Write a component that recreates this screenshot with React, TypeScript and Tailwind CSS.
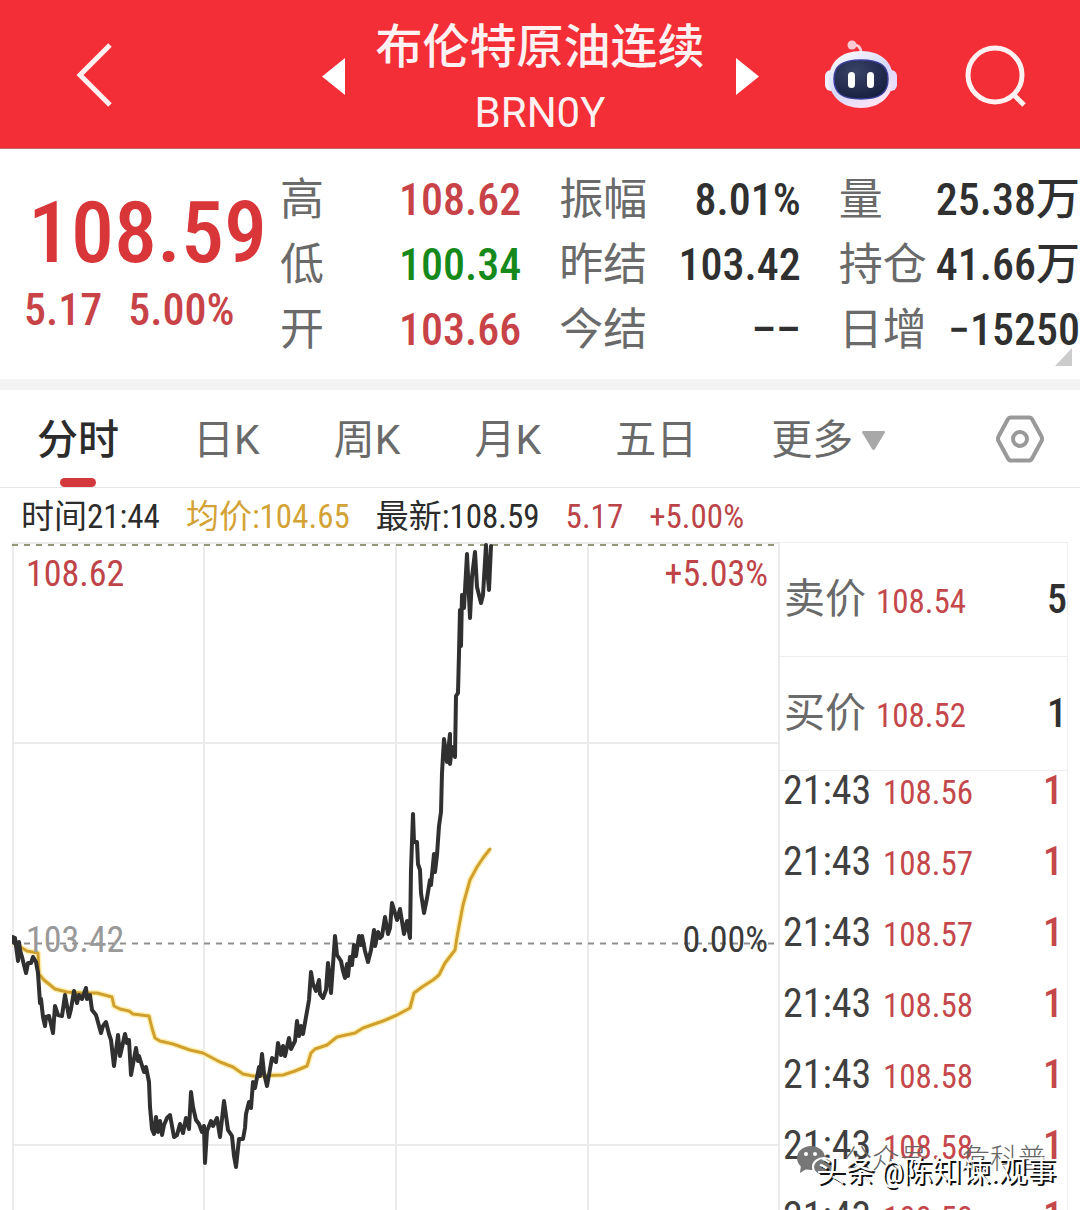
import { clsx } from "clsx";

interface Stat {
  label: string;
  value: string;
  tone?: "up" | "down";
}

interface Tick {
  time: string;
  price: string;
  volume: number;
}

// column by column, three rows each
const stats: Stat[] = [
  { label: "高", value: "108.62", tone: "up" },
  { label: "低", value: "100.34", tone: "down" },
  { label: "开", value: "103.66", tone: "up" },
  { label: "振幅", value: "8.01%" },
  { label: "昨结", value: "103.42" },
  { label: "今结", value: "––" },
  { label: "量", value: "25.38万" },
  { label: "持仓", value: "41.66万" },
  { label: "日增", value: "−15250" },
];

const tabs = ["分时", "日K", "周K", "月K", "五日"];

const quotes = [
  { label: "卖价", price: "108.54", volume: 5 },
  { label: "买价", price: "108.52", volume: 1 },
];

const ticks: Tick[] = [
  { time: "21:43", price: "108.56", volume: 1 },
  { time: "21:43", price: "108.57", volume: 1 },
  { time: "21:43", price: "108.57", volume: 1 },
  { time: "21:43", price: "108.58", volume: 1 },
  { time: "21:43", price: "108.58", volume: 1 },
  { time: "21:43", price: "108.58", volume: 1 },
  { time: "21:43", price: "108.58", volume: 1 },
];

const pricePoints =
  "13,937 14,943 15,938 18,961 19,942 20,950 22,957 26,973 28,963 31,963 33,957 36,962 38,973 40,1003 41,999 43,1017 45,1026 46,1017 49,1016 51,1024 53,1033 55,1006 58,1015 62,1016 65,995 69,1017 71,1009 74,991 77,1003 79,995 82,999 86,988 87,999 90,995 92,1010 96,1015 101,1033 103,1026 106,1022 109,1034 111,1040 114,1066 118,1035 120,1056 125,1034 127,1043 129,1040 131,1075 136,1048 138,1061 139,1056 144,1072 146,1067 149,1082 150,1107 152,1129 154,1134 156,1117 158,1132 160,1121 162,1135 164,1125 167,1118 170,1115 174,1137 177,1135 180,1124 183,1133 186,1118 189,1129 191,1092 193,1107 196,1120 199,1124 202,1132 204,1126 205,1163 207,1131 211,1121 213,1126 217,1118 220,1137 224,1101 228,1130 230,1133 232,1136 234,1156 236,1167 239,1139 243,1139 245,1128 246,1114 249,1102 251,1108 253,1082 255,1088 259,1067 260,1076 262,1054 264,1073 267,1086 272,1058 276,1062 278,1043 281,1055 283,1046 285,1056 289,1038 291,1049 295,1041 297,1021 299,1036 301,1026 303,1034 306,1017 309,1000 311,972 313,984 316,991 319,980 320,994 323,998 326,990 328,963 331,993 335,936 337,955 341,961 343,971 345,978 347,964 348,976 350,957 352,965 354,945 356,956 359,936 361,945 362,936 365,951 368,962 371,950 374,930 375,946 378,932 380,938 382,936 385,917 388,934 390,928 392,903 397,920 400,909 404,934 407,921 410,938 411,870 413,814 414,842 417,842 418,864 420,870 421,893 424,913 427,898 430,880 431,885 434,854 435,872 437,855 439,826 441,812 442,773 444,739 447,762 450,734 450,764 452,747 455,757 456,696 458,693 459,653 460,610 461,646 462,595 464,608 467,554 470,618 472,577 475,552 477,587 481,603 483,595 486,545 487,567 489,590 491,546";

const averagePoints =
  "13,942 22,948 27,951 38,953 39,974 44,980 55,989 67,992 82,993 97,993 112,997 114,1006 120,1009 129,1011 133,1014 149,1016 152,1028 155,1038 160,1041 173,1044 190,1050 203,1053 220,1062 233,1067 243,1074 253,1076 283,1075 295,1071 307,1066 311,1053 315,1049 327,1045 337,1037 355,1033 363,1028 383,1021 397,1015 410,1008 414,993 422,987 433,980 439,975 445,963 455,950 457,937 463,905 470,880 477,867 483,858 490,849";

function RobotIcon() {
  return (
    <svg width="72" height="68" viewBox="0 0 72 68" aria-hidden="true">
      <defs>
        <linearGradient id="shell" x1="0" y1="0" x2="0.6" y2="1">
          <stop offset="0" stopColor="#fff" />
          <stop offset="0.6" stopColor="#d5d8fb" />
          <stop offset="1" stopColor="#fbe4f4" />
        </linearGradient>
        <radialGradient id="visor" cx="0.4" cy="0.3" r="0.8">
          <stop offset="0" stopColor="#3a4468" />
          <stop offset="1" stopColor="#141c3c" />
        </radialGradient>
      </defs>
      <path d="M27 5 Q36 4 36 13" fill="none" stroke="#fbc9d4" strokeWidth="3" />
      <circle cx="27" cy="5" r="4.5" fill="#fbc9d4" />
      <rect x="0" y="30" width="12" height="21" rx="6" fill="#eef" />
      <rect x="60" y="30" width="12" height="21" rx="6" fill="#e6dcfa" />
      <path d="M36 11 C56 11 68 22 68 39 C68 57 54 68 36 68 C18 68 4 57 4 39 C4 22 16 11 36 11 Z" fill="url(#shell)" />
      <path d="M36 20 C55 20 63 26 63 39 C63 53 55 59 36 59 C17 59 9 53 9 39 C9 26 17 20 36 20 Z" fill="url(#visor)" stroke="#3c3f9c" strokeWidth="1.5" />
      <rect x="23" y="32" width="7" height="16" rx="3.5" fill="#fff" />
      <rect x="42" y="32" width="7" height="16" rx="3.5" fill="#fff" />
    </svg>
  );
}

function Header() {
  return (
    <header className="grid grid-cols-[1fr_auto_1fr] items-center shrink-0 h-[149px] pt-[4px] bg-[#f32e37] text-[#fff1f1] border-b border-[#b9686b]">
      <div className="flex items-center justify-between pl-[76px]">
        <button type="button" aria-label="返回">
          <svg width="38" height="68" viewBox="0 0 38 68" fill="none" stroke="currentColor" strokeWidth="5">
            <path d="M34 3 L4 33 L34 63" />
          </svg>
        </button>
        <button type="button" aria-label="上一个">
          <svg width="23" height="37" viewBox="0 0 23 37" fill="#fff">
            <path d="M23 0 V37 L0 18.500 Z" />
          </svg>
        </button>
      </div>
      <div className="px-[31px] pt-[8px] text-center">
        <h1 className="text-[47px] leading-[66px] font-medium">布伦特原油连续</h1>
        <p className="font-['Roboto'] text-[42px] leading-[66px]">BRN0Y</p>
      </div>
      <div className="flex items-center pr-[54px]">
        <button type="button" aria-label="下一个">
          <svg width="23" height="37" viewBox="0 0 23 37" fill="#fff">
            <path d="M0 0 V37 L23 18.500 Z" />
          </svg>
        </button>
        <button type="button" aria-label="智能助手" className="ml-auto pb-[5px]">
          <RobotIcon />
        </button>
        <button type="button" aria-label="搜索" className="ml-[67px]">
          <svg width="62" height="62" viewBox="0 0 62 62" fill="none" stroke="currentColor" strokeWidth="5">
            <circle cx="31" cy="30" r="27" />
            <path d="M49 49 L60 60" />
          </svg>
        </button>
      </div>
    </header>
  );
}

function Summary() {
  return (
    <section className="relative flex shrink-0 pt-[18px] pb-[17px] font-medium">
      <div className="w-[280px] shrink-0 pt-[22px] text-[#d9363a]">
        <p className="pl-[28px] text-[86px] leading-[88px]">108.59</p>
        <p className="flex gap-[26px] pl-[24px] text-[44px] leading-[66px] text-[#c84347]">
          <span>5.17</span>
          <span>5.00%</span>
        </p>
      </div>
      <dl className="flex-1 grid grid-flow-col grid-cols-3 grid-rows-3 gap-x-[38px]">
        {stats.map((stat) => (
          <div key={stat.label} className="flex items-center justify-between h-[65px] text-[44px] whitespace-nowrap">
            <dt className="font-normal text-[#6a6a6a]">{stat.label}</dt>
            <dd
              className={clsx(
                stat.tone === "up" && "text-[#c84347]",
                stat.tone === "down" && "text-[#16891b]",
                !stat.tone && "text-[#303030]"
              )}
            >
              {stat.value}
            </dd>
          </div>
        ))}
      </dl>
      <svg className="absolute right-[8px] bottom-[13px]" width="17" height="18" viewBox="0 0 17 18" fill="#ccc">
        <path d="M17 0 V18 H0 Z" />
      </svg>
    </section>
  );
}

function TabBar() {
  return (
    <nav className="flex items-stretch gap-[74px] shrink-0 h-[98px] pl-[37px] pr-[36px] border-b border-[#e6e6e6] font-['Roboto','Noto_Sans_CJK_SC',sans-serif] text-[41px]">
      {tabs.map((tab, index) => (
        <button
          key={tab}
          type="button"
          className={clsx("relative pt-[4px]", index === 0 ? "font-medium text-[#2c2c2c]" : "text-[#6a6a6a]")}
        >
          {tab}
          {index === 0 && (
            <span className="absolute bottom-0 left-1/2 -translate-x-1/2 w-[36px] h-[9px] rounded-full bg-[#d3383c]" />
          )}
        </button>
      ))}
      <button type="button" className="flex items-center gap-[9px] pt-[4px] text-[#6a6a6a]">
        更多
        <svg width="23" height="19" viewBox="0 0 23 19" fill="#a8a8a8">
          <path d="M1 0 H22 Q24 1 22 3 L13 18 Q11.500 20 10 18 L1 3 Q-1 1 1 0 Z" />
        </svg>
      </button>
      <button type="button" aria-label="设置" className="ml-auto">
        <svg width="48" height="48" viewBox="0 0 48 48" fill="none" stroke="#999" strokeWidth="4" strokeLinejoin="round">
          <path d="M15 2.500 H33 Q35 2.500 36 4 L45.500 21.500 Q46.500 24 45.500 26 L36 43.500 Q35 45.500 33 45.500 H15 Q13 45.500 12 43.500 L2.500 26 Q1.500 24 2.500 21.500 L12 4 Q13 2.500 15 2.500 Z" />
          <circle cx="24" cy="24" r="7" />
        </svg>
      </button>
    </nav>
  );
}

function InfoLine() {
  return (
    <div className="flex items-center gap-[26px] shrink-0 h-[54px] pt-[4px] pl-[21px] text-[33px] whitespace-nowrap text-[#2c2c2c]">
      <span>时间21:44</span>
      <span className="text-[#d3a336]">均价:104.65</span>
      <span>最新:108.59</span>
      <span className="text-[#bb4448]">5.17</span>
      <span className="text-[#bb4448]">+5.00%</span>
    </div>
  );
}

function Chart() {
  return (
    <div className="relative flex-1 text-[36px] leading-[40px]">
      <svg className="block w-full h-auto" viewBox="12 542 768 668" fill="none">
        <g stroke="#ebebeb" strokeWidth="2">
          <path d="M12 543 H780 M12 743 H780 M12 1145 H780" />
          <path d="M13 542 V1210 M204 542 V1210 M396 542 V1210 M588 542 V1210 M779 542 V1210" />
        </g>
        <path d="M12 545 H776" stroke="#96967a" strokeWidth="2" strokeDasharray="6 6" />
        <path d="M24 943.500 H776" stroke="#8f8f8f" strokeWidth="2" strokeDasharray="6 6" />
        <polyline points={averagePoints} stroke="#fff0b8" strokeWidth="6" strokeLinejoin="round" />
        <polyline points={averagePoints} stroke="#d0a02e" strokeWidth="3" strokeLinejoin="round" strokeLinecap="round" />
        <polyline points={pricePoints} stroke="#303030" strokeWidth="4" strokeLinejoin="round" strokeLinecap="round" />
      </svg>
      <span className="absolute left-[14px] top-[12px] text-[#bf4448]">108.62</span>
      <span className="absolute right-[12px] top-[12px] text-[#bf4448]">+5.03%</span>
      <span className="absolute left-[14px] top-[378px] text-[#999]">103.42</span>
      <span className="absolute right-[12px] top-[378px] text-[#3a3a3a]">0.00%</span>
    </div>
  );
}

function OrderPanel() {
  return (
    <div className="w-[288px] shrink-0 border-t border-r border-[#eee]">
      <dl>
        {quotes.map((quote) => (
          <div key={quote.label} className="flex items-baseline h-[114px] pt-[28px] pl-[4px] border-b border-[#eee] leading-[56px]">
            <dt className="text-[41px] text-[#6a6a6a]">{quote.label}</dt>
            <dd className="ml-[10px] text-[33px] text-[#c4474b]">{quote.price}</dd>
            <dd className="ml-auto text-[40px] font-medium text-[#303030]">{quote.volume}</dd>
          </div>
        ))}
      </dl>
      <table className="w-full leading-[40px]">
        <tbody>
          {ticks.map((tick, index) => (
            <tr key={index} className="h-[71px] align-baseline">
              <td className="w-[103px] pl-[3px] text-[40px] text-[#404040]">{tick.time}</td>
              <td className="text-[33px] text-[#c4474b]">{tick.price}</td>
              <td className="pr-[4px] text-right text-[40px] font-medium text-[#c4474b]">{tick.volume}</td>
            </tr>
          ))}
        </tbody>
      </table>
    </div>
  );
}

function Watermark() {
  return (
    <div className="absolute right-[24px] bottom-[20px] w-[260px] h-[48px] whitespace-nowrap">
      <div className="absolute left-0 top-0 flex items-center text-[28px] leading-[36px] font-light text-[#666]">
        <svg width="40" height="34" viewBox="0 0 40 34" fill="#777">
          <ellipse cx="15" cy="15" rx="14" ry="12" />
          <path d="M5 22 L4 30 L12 25 Z" />
          <ellipse cx="28" cy="24" rx="11" ry="9" stroke="#fff" strokeWidth="2" />
          <circle cx="10" cy="11" r="2" fill="#fff" />
          <circle cx="19" cy="11" r="2" fill="#fff" />
        </svg>
        <span className="ml-[8px]">公众号</span>
        <span className="ml-[34px]">危科普</span>
      </div>
      <p className="absolute right-0 bottom-0 text-[29px] leading-[36px] text-white [text-shadow:2px_2px_0px_#111]">
        头条 @陈知谏.观事
      </p>
    </div>
  );
}

export default function App() {
  return (
    <main className="relative flex flex-col h-screen overflow-hidden bg-white font-['Roboto_Condensed','Roboto','Noto_Sans_CJK_SC',sans-serif]">
      <Header />
      <Summary />
      <div className="h-[11px] shrink-0 bg-[#f4f4f4]" />
      <TabBar />
      <InfoLine />
      <div className="flex items-start px-[12px]">
        <Chart />
        <OrderPanel />
      </div>
      <Watermark />
    </main>
  );
}
